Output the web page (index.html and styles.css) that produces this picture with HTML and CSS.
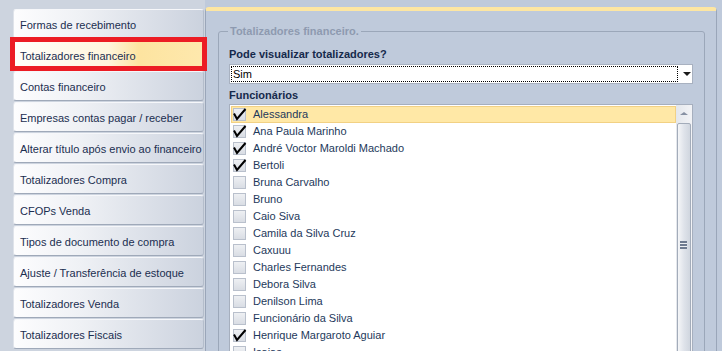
FILE: index.html
```html
<!DOCTYPE html>
<html lang="pt-BR">
<head>
  <meta charset="UTF-8">
  <meta name="viewport" content="width=device-width, initial-scale=1.0">
  <title>Configurações</title>
  <link rel="stylesheet" href="styles.css">
</head>
<body>
  <!-- Menu lateral -->
  <nav class="menu">
    <div class="menu-item">Formas de recebimento</div>
    <div class="menu-item active">Totalizadores financeiro</div>
    <div class="menu-item">Contas financeiro</div>
    <div class="menu-item">Empresas contas pagar / receber</div>
    <div class="menu-item">Alterar título após envio ao financeiro</div>
    <div class="menu-item">Totalizadores Compra</div>
    <div class="menu-item">CFOPs Venda</div>
    <div class="menu-item">Tipos de documento de compra</div>
    <div class="menu-item">Ajuste / Transferência de estoque</div>
    <div class="menu-item">Totalizadores Venda</div>
    <div class="menu-item">Totalizadores Fiscais</div>
  </nav>

  <!-- Painel -->
  <main class="panel">
    <fieldset class="group">
      <legend>Totalizadores financeiro.</legend>

      <div class="field-label">Pode visualizar totalizadores?</div>
      <div class="combo">
        <span class="combo-value">Sim</span>
        <span class="combo-arrow"></span>
      </div>

      <div class="field-label list-label">Funcionários</div>
      <div class="checklist">
        <div id="items" class="items"></div>
        <div class="scrollbar">
          <div class="scroll-up"></div>
          <div class="thumb"><span class="grip"></span></div>
        </div>
      </div>
    </fieldset>
  </main>

  <script>
    const funcionarios = [
      { nome: "Alessandra", marcado: true },
      { nome: "Ana Paula Marinho", marcado: true },
      { nome: "André Voctor Maroldi Machado", marcado: true },
      { nome: "Bertoli", marcado: true },
      { nome: "Bruna Carvalho", marcado: false },
      { nome: "Bruno", marcado: false },
      { nome: "Caio Siva", marcado: false },
      { nome: "Camila da Silva Cruz", marcado: false },
      { nome: "Caxuuu", marcado: false },
      { nome: "Charles Fernandes", marcado: false },
      { nome: "Debora Silva", marcado: false },
      { nome: "Denilson Lima", marcado: false },
      { nome: "Funcionário da Silva", marcado: false },
      { nome: "Henrique Margaroto Aguiar", marcado: true },
      { nome: "Isaias", marcado: false }
    ];

    const check = `<svg class="check" width="14" height="14" viewBox="0 0 14 14"><path d="M1 5.5 L4 11 L12.5 1" fill="none" stroke="#000" stroke-width="2"/></svg>`;

    // Monta a lista de funcionários
    const lista = document.getElementById("items");
    funcionarios.forEach((f, i) => {
      const item = document.createElement("div");
      item.classList.add("item");
      if (i === 0) item.classList.add("selected");
      item.innerHTML = `<span class="box">${f.marcado ? check : ""}</span>${f.nome}`;
      lista.appendChild(item);
    });
  </script>
</body>
</html>
```

FILE: styles.css
```css
/* Global */
html {
  overflow: hidden;
}

body {
  margin: 0;
  height: 351px;
  overflow: hidden;
  display: flex;
  font-family: "Liberation Sans", Arial, sans-serif;
  font-size: 11px;
  background-color: #bfcadb;
  color: #1e395b;
}

/* Menu lateral */
.menu {
  width: 205px;
  flex-shrink: 0;
  box-sizing: border-box;
  padding: 9px 0 0 13px;
  background-color: #cdd4df;
}

.menu-item {
  position: relative;
  width: 191px;
  height: 30px;
  box-sizing: border-box;
  margin-bottom: 1px;
  padding: 9px 6px 0;
  line-height: 13px;
  white-space: nowrap;
  color: #1b2e50;
  border: 1px solid;
  border-color: #f6f7fa #b4bdcb #9fa9b9 #dfe3ea;
  border-radius: 3px;
  background: linear-gradient(to right, #fdfdfe 0%, #eff1f5 35%, #cbd2de 100%);
}

.menu-item.active {
  background: linear-gradient(to right, #fffefb 0%, #fff5dc 50%, #fde4a0 66%, #fee8ad 100%);
}

/* marcação vermelha */
.menu-item.active::after {
  content: "";
  position: absolute;
  top: -4px;
  left: -4px;
  right: -4px;
  bottom: -2px;
  border: 5px solid #ec1c24;
}

/* Painel */
.panel {
  flex: 1;
  margin: 7px 5px 0 0;
  padding: 0 11px 0 12px;
  border-top: 4px solid #fde6a2;
  border-left: 1px solid #9aa6b9;
  border-right: 1px solid #9aa6b9;
  border-radius: 4px 4px 0 0;
  background-color: #bfcadb;
}

.group {
  margin: 14px 0 0;
  padding: 0 11px 0 10px;
  min-width: 0;
  border: 1px solid #9ba7b9;
  border-radius: 3px;
}

.group legend {
  margin-left: -1px;
  padding: 0 2px;
  line-height: 13px;
  font-weight: bold;
  color: #8e9ab0;
}

.field-label {
  margin-top: 10px;
  line-height: 13px;
  font-weight: bold;
  color: #15294b;
}

.list-label {
  margin-top: 5px;
}

/* Combo */
.combo {
  display: flex;
  align-items: flex-start;
  height: 20px;
  box-sizing: border-box;
  margin-top: 3px;
  border: 1px solid #a8b1c0;
  background-color: #fff;
}

.combo-value {
  width: 447px;
  height: 16px;
  box-sizing: border-box;
  margin: 1px 0 0 1px;
  padding-left: 1px;
  line-height: 14px;
  color: #000;
  border: 1px dotted #000;
}

.combo-arrow {
  margin: 7px 1px 0 auto;
  border-left: 4px solid transparent;
  border-right: 4px solid transparent;
  border-top: 4px solid #1b1b1b;
}

/* Lista de funcionários */
.checklist {
  display: flex;
  height: 250px;
  overflow: hidden;
  margin-top: 2px;
  border: 1px solid #a6afbe;
  border-bottom: none;
  background-color: #fff;
}

.items {
  flex: 1;
  padding: 1px 0 0 1px;
}

.item {
  display: flex;
  align-items: center;
  height: 17px;
  box-sizing: border-box;
  padding-left: 1px;
  line-height: 15px;
  white-space: nowrap;
  border: 1px solid transparent;
}

.item.selected {
  background-color: #ffe8a6;
  border-color: #f2d184;
}

.box {
  position: relative;
  width: 13px;
  height: 13px;
  box-sizing: border-box;
  margin-right: 7px;
  border: 1px solid #b9c0cc;
  background: linear-gradient(#eef0f3, #d9dde4);
}

.check {
  position: absolute;
  top: -1px;
  left: -1px;
}

/* Barra de rolagem */
.scrollbar {
  width: 16px;
  background: linear-gradient(to right, #e4e7ec, #f2f3f6);
}

.scroll-up {
  height: 17px;
  display: flex;
  justify-content: center;
  align-items: center;
}

.scroll-up::after {
  content: "";
  border-left: 4px solid transparent;
  border-right: 4px solid transparent;
  border-bottom: 3px solid #8791a3;
}

.thumb {
  position: relative;
  height: 400px;
  margin: 1px 1px 0;
  border: 1px solid #a3acba;
  border-radius: 2px;
  background: linear-gradient(to right, #f5f6f8, #dfe3ea 50%, #d0d6df);
}

.grip {
  position: absolute;
  top: 117px;
  left: 2px;
  width: 7px;
  height: 8px;
  background: repeating-linear-gradient(#6f7b90 0 2px, #eef0f3 2px 3px);
}
```
